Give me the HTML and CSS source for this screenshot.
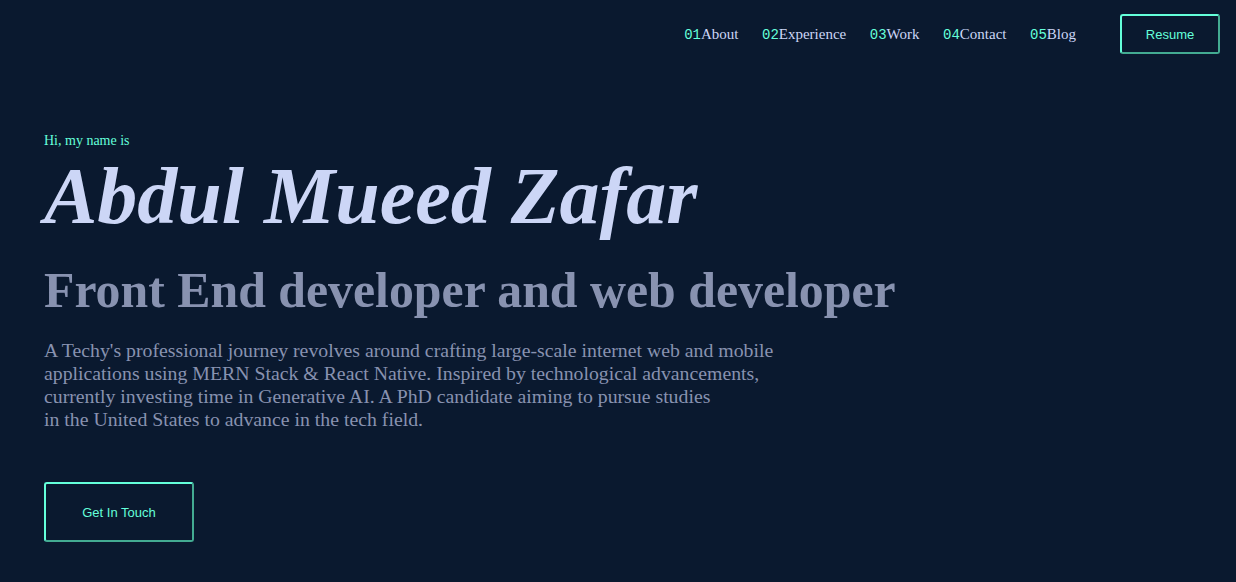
FILE: index.html
```html
<!DOCTYPE html>
<html lang="en">
<head>
<meta charset="utf-8">
<title>Abdul Mueed Zafar</title>
<link rel="stylesheet" href="styles.css">
</head>
<body>
<header class="nav">
  <ol class="nav-links">
    <li><a href="#"><span class="num">01</span>About</a></li>
    <li><a href="#"><span class="num">02</span>Experience</a></li>
    <li><a href="#"><span class="num">03</span>Work</a></li>
    <li><a href="#"><span class="num">04</span>Contact</a></li>
    <li><a href="#"><span class="num">05</span>Blog</a></li>
  </ol>
  <button class="btn btn-resume">Resume</button>
</header>
<main class="hero">
  <p class="hi">Hi, my name is</p>
  <h1 class="name">Abdul Mueed Zafar</h1>
  <h2 class="role">Front End developer and web developer</h2>
  <p class="bio">A Techy's professional journey revolves around crafting large-scale internet web and mobile<br>applications using MERN Stack &amp; React Native. Inspired by technological advancements,<br>currently investing time in Generative AI. A PhD candidate aiming to pursue studies<br>in the United States to advance in the tech field.</p>
  <button class="btn btn-touch">Get In Touch</button>
</main>
</body>
</html>
```
FILE: styles.css
```css
html, body {
  margin: 0;
  padding: 0;
  background: #0a192f;
  font-family: "Liberation Serif", "Times New Roman", serif;
  height: 100%;
}
.nav {
  display: flex;
  justify-content: flex-end;
  align-items: center;
  padding: 14px 16px 0 0;
}
.nav-links {
  display: flex;
  list-style: none;
  margin: 0 44px 0 0;
  padding: 0;
  gap: 23.5px;
}
.nav-links a {
  color: #ccd6f6;
  text-decoration: none;
  font-size: 15px;
}
.num {
  color: #64ffda;
  font-family: "Liberation Mono", monospace;
  font-size: 14px;
}
.btn {
  background: transparent;
  color: #64ffda;
  border: 2px outset #64ffda;
  border-radius: 3px;
  font-family: "Liberation Sans", Arial, sans-serif;
  font-size: 13px;
  cursor: pointer;
}
.btn-resume {
  width: 100px;
  height: 40px;
}
.hero {
  padding: 0 0 0 44px;
}
.hi {
  color: #64ffda;
  font-size: 14px;
  margin: 79px 0 3px 0;
}
.name {
  color: #ccd6f6;
  font-style: italic;
  font-weight: bold;
  font-size: 80px;
  margin: 0;
  line-height: 1.1;
}
.role {
  color: #8892b0;
  font-weight: bold;
  font-size: 49.8px;
  margin: 22px 0 0 0;
}
.bio {
  color: #8892b0;
  font-size: 19.8px;
  line-height: 23px;
  margin: 20px 0 0 0;
}
.btn-touch {
  width: 150px;
  height: 60px;
  margin-top: 51px;
}
```
